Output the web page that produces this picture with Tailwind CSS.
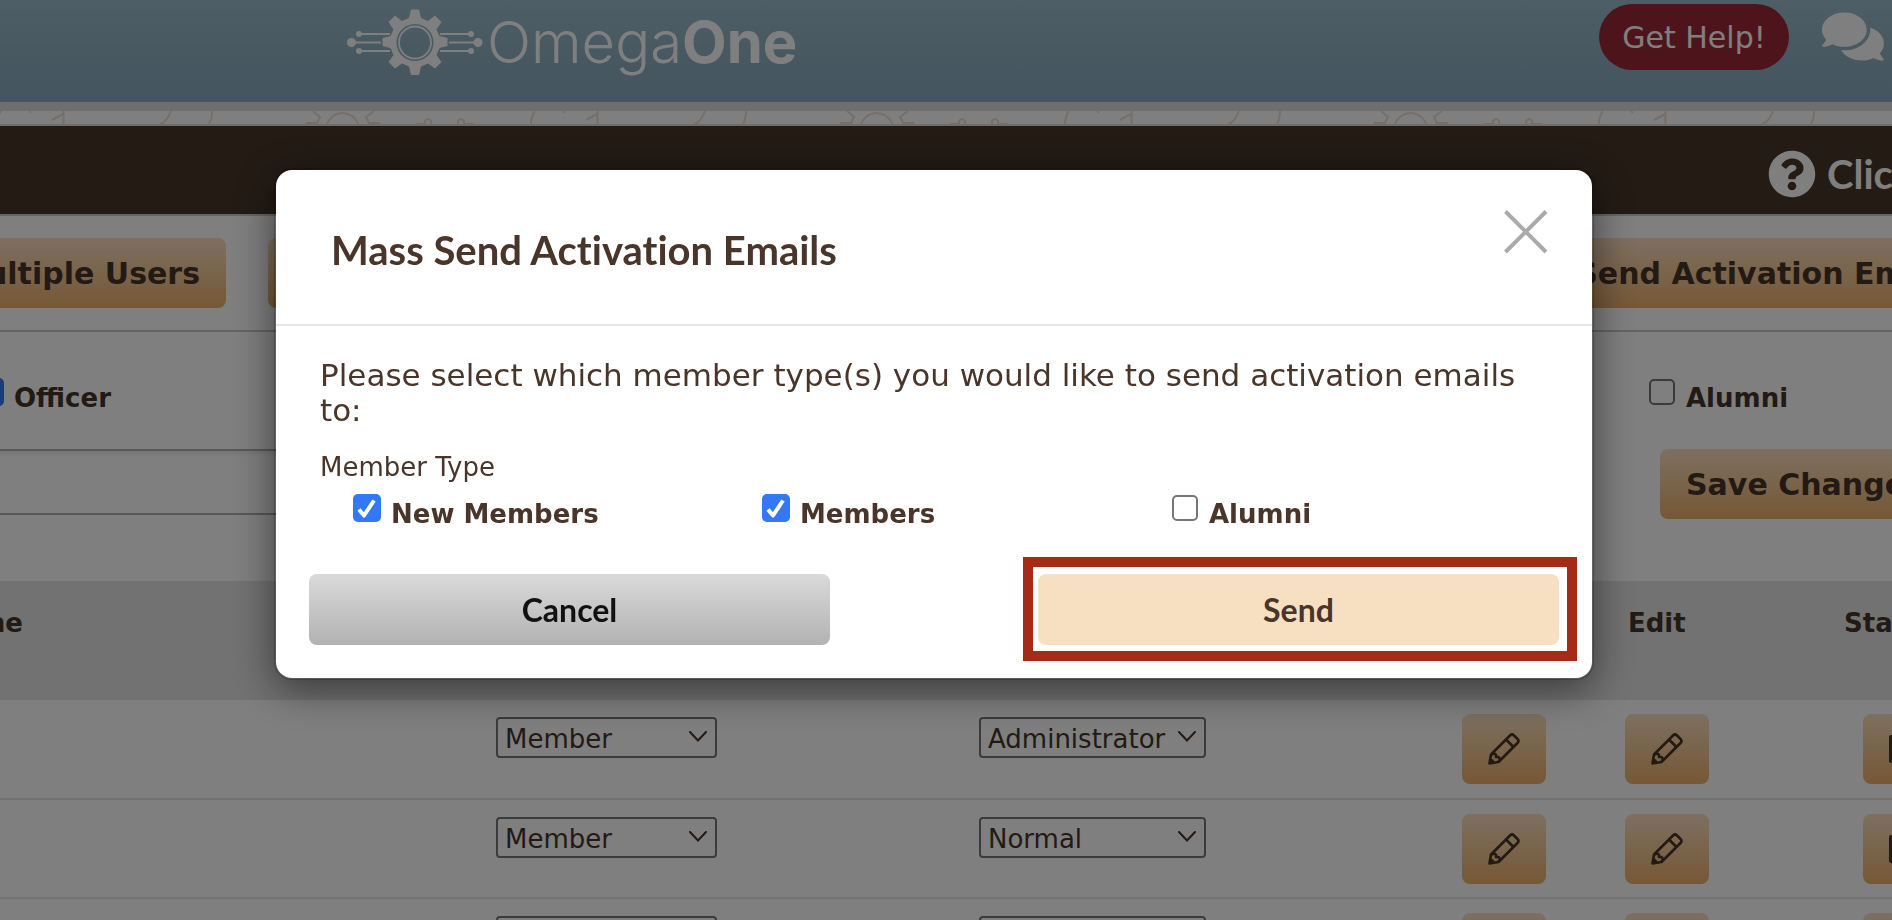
<!DOCTYPE html>
<html lang="en">

<head>
    <meta charset="UTF-8">
    <meta name="viewport" content="width=device-width, initial-scale=1.0">
    <title>OmegaOne - Users</title>
    <script src="https://cdn.jsdelivr.net/npm/@tailwindcss/browser@4"></script>
</head>

<body class="h-screen overflow-hidden bg-white font-['DejaVu_Sans',sans-serif] text-[26px] leading-[30px] text-[#493529]">

    <!-- Shared icons -->
    <svg class="hidden">
        <symbol id="tick" viewBox="0 0 28 28">
            <path d="M6 15.500l5 6L21 6.500" fill="none" stroke="#fff" stroke-width="4" stroke-linejoin="round" />
        </symbol>
        <symbol id="chevron" viewBox="0 0 18 12">
            <path d="M1 1l8 8.500L17 1" fill="none" stroke="currentColor" stroke-width="2" stroke-linecap="round" />
        </symbol>
        <symbol id="pencil" viewBox="0 0 32 32">
            <g fill="none" stroke="currentColor" stroke-width="2.600" stroke-linejoin="round">
                <path d="M1.500 30.500L3 21.500 22 2.500q2-2 4 0l3.500 3.500q2 2 0 4L10.500 29z" />
                <path d="M18 6.500L25.500 14" />
                <path d="M3.500 21.500q3.500-2 4.500 0.500v2h2.500q2.500 1.500 0 4.500" />
            </g>
            <path d="M1 31l1-6q4 1 5 5z" fill="currentColor" />
        </symbol>
    </svg>

    <!-- Header -->
    <header class="flex h-[102px] items-start bg-linear-to-b from-[#9abccc] to-[#8aa8bc] text-white">
        <a href="#" class="ml-[347px] flex items-center" aria-label="OmegaOne">
            <svg class="mt-[9px] h-[66px] w-[136px]" viewBox="0 0 136 66">
                <g stroke="#fff" stroke-width="2">
                    <path d="M12 25H43M5 33.500H34M12 42H43M93 25H124M102 33.500H131M93 42H124" />
                </g>
                <g fill="#fff">
                    <circle cx="12" cy="25" r="3" />
                    <circle cx="12" cy="42" r="3" />
                    <circle cx="4.500" cy="33.500" r="4.500" />
                    <circle cx="124" cy="25" r="3" />
                    <circle cx="124" cy="42" r="3" />
                    <circle cx="131" cy="33.500" r="4.500" />
                    <path fill-rule="evenodd" d="M64 0.500h8l2 8.500 7 3 7-5.500 6.500 6.500-5 7.500 3 6.500 8 2v8l-8 2-3 7 5 7-6.500 6.500-7-5-7 3-2 8.500h-8l-2-8.500-7-3-7 5-6.500-6.500 5-7-3-7-8-2v-8l8-2 3-6.500-5-7.500 6.500-6.500 7 5.500 7-3zM68 15a18.500 18.500 0 1 0 0.010 0z" />
                </g>
                <circle cx="68" cy="33.500" r="16" fill="none" stroke="#fff" stroke-width="1.800" />
            </svg>
            <span class="ml-1 mt-[9px] font-['Inter',sans-serif] text-[58px] leading-[66px] font-light">Omega<b class="font-bold">One</b></span>
        </a>
        <button class="mt-1 ml-auto h-[66px] w-[190px] rounded-full bg-[#9a2836] pt-0.5 text-[30px]">Get Help!</button>
        <a href="#" class="mt-[9px] mr-2 ml-[33px]" aria-label="Messages">
            <svg class="h-[55px] w-[62px]" viewBox="0 0 576 512" fill="currentColor">
                <path d="M416 192c0-88.400-93.100-160-208-160S0 103.600 0 192c0 34.300 14.100 65.900 38 92-13.400 30.200-35.500 54.200-35.800 54.500-2.200 2.300-2.800 5.700-1.500 8.700S4.800 352 8 352c36.600 0 66.900-12.300 88.700-25 32.200 15.700 70.300 25 111.300 25 114.900 0 208-71.600 208-160zm122 220c23.900-26 38-57.700 38-92 0-66.900-53.500-124.200-129.300-148.100.9 6.600 1.300 13.300 1.300 20.100 0 105.900-107.700 192-240 192-10.800 0-21.300-.8-31.700-1.900C207.800 439.600 281.800 480 368 480c41 0 79.100-9.200 111.300-25 21.800 12.700 52.100 25 88.700 25 3.200 0 6.100-1.900 7.300-4.800 1.300-2.900.7-6.300-1.500-8.700-.3-.3-22.400-24.200-35.800-54.500z" />
            </svg>
        </a>
    </header>

    <!-- Patterned strip -->
    <div class="h-6 border-t-[9px] border-b-2 border-[#dcdcdc]">
        <svg class="block h-[13px] w-full">
            <defs>
                <pattern id="doodles" x="-228" width="534" height="13" patternUnits="userSpaceOnUse">
                    <g fill="none" stroke="#e6dfd8" stroke-width="2">
                        <path d="M7 0L14 6L11 12H0M68 0L60 6L63 12H74M21 13q5-11 15.500-11t16 11" />
                        <path d="M110 13H119V10q3-4 6 0V13M152 13V10q3-4 6 0V13H168" />
                        <path d="M229 0q-4 6-4 13M257 0l2 2M280 9L291 3M291.500 0V13M399 0q-3 8-8 12l-3 1M440 0q0 8-3 13" />
                    </g>
                </pattern>
            </defs>
            <rect width="100%" height="13" fill="url(#doodles)" />
        </svg>
    </div>

    <!-- Help bar -->
    <div class="flex h-[90px] items-center border-b-2 border-[#cccccc] bg-[#483629] pt-2 text-white">
        <a href="#" class="ml-auto flex w-[124px] items-center gap-[11px] font-['Lato',sans-serif] text-[40px] leading-[48px] font-bold whitespace-nowrap">
            <svg class="h-12 w-12 shrink-0" viewBox="0 0 512 512" fill="currentColor">
                <path d="M504 256c0 136.997-111.043 248-248 248S8 392.997 8 256C8 119.083 119.043 8 256 8s248 111.083 248 248zM262.655 90c-54.497 0-89.255 22.957-116.549 63.758-3.536 5.286-2.353 12.415 2.715 16.258l34.699 26.310c5.205 3.947 12.621 3.008 16.665-2.122 17.864-22.658 30.113-35.797 57.303-35.797 20.429 0 45.698 13.148 45.698 32.958 0 14.976-12.363 22.667-32.534 33.976C247.128 238.528 216 254.941 216 296v4c0 6.627 5.373 12 12 12h56c6.627 0 12-5.373 12-12v-1.333c0-28.462 83.186-29.647 83.186-106.667 0-58.002-60.165-102-116.531-102zM256 338c-25.365 0-46 20.635-46 46 0 25.364 20.635 46 46 46s46-20.636 46-46c0-25.364-20.635-46-46-46z" />
            </svg>
            Click Here
        </a>
    </div>

    <!-- Actions -->
    <div class="flex h-[116px] items-center border-b-2 border-[#c8c8c8] text-[30px] leading-9 font-bold whitespace-nowrap">
        <button class="flex h-[70px] w-[226px] items-center justify-end overflow-hidden rounded-r-lg bg-linear-to-b from-[#fae0c0] to-[#ecb06a] pt-0.5 pr-[26px]">Add Multiple Users</button>
        <button class="ml-[42px] h-[70px] w-[300px] rounded-lg bg-linear-to-b from-[#fae0c0] to-[#ecb06a] pt-0.5" aria-label="Export Users"></button>
        <button class="ml-auto h-[70px] w-[438px] overflow-hidden rounded-l-lg bg-linear-to-b from-[#fae0c0] to-[#ecb06a] pt-0.5 pl-[26px] text-left">Mass Send Activation Emails</button>
    </div>

    <!-- Filters -->
    <div class="flex h-[117px] items-start pt-[46px] font-bold">
        <label class="-ml-6 flex items-start gap-[10px]">
            <span class="relative">
                <input type="checkbox" checked class="block h-7 w-7 appearance-none rounded-[5px] bg-[#3478f6]">
                <svg class="pointer-events-none absolute inset-0 h-7 w-7"><use href="#tick" /></svg>
            </span>
            <span class="mt-[5px]">Officer</span>
        </label>
        <label class="ml-auto flex w-[244px] items-start gap-[10px]">
            <input type="checkbox" class="m-px block h-[26px] w-[26px] appearance-none rounded-[5px] border-2 border-[#767676] bg-white">
            <span class="mt-[5px]">Alumni</span>
        </label>
    </div>

    <div class="flex h-[132px] items-start justify-between">
        <input type="text" aria-label="Search users" class="-ml-2 h-[66px] w-1/2 border-y-2 border-[#b0b0b0] shadow-[inset_0_3px_4px_rgba(0,0,0,0.08)]">
        <button class="h-[70px] w-[232px] overflow-hidden rounded-l-lg bg-linear-to-b from-[#fae0c0] to-[#ecb06a] pt-0.5 pl-[26px] text-left text-[30px] leading-9 font-bold whitespace-nowrap">Save Changes</button>
    </div>

    <!-- Users -->
    <table class="w-full table-fixed border-collapse">
        <colgroup>
            <col>
            <col class="w-[483px]">
            <col class="w-[483px]">
            <col class="w-[163px]">
            <col class="w-[219px]">
            <col class="w-[48px]">
        </colgroup>
        <thead>
            <tr class="h-[119px] bg-[#e4e4e4] text-left align-top">
                <th class="pt-[27px]"><div class="flex w-[23px] justify-end">Name</div></th>
                <th></th>
                <th></th>
                <th></th>
                <th class="pt-[27px] pl-[3px]">Edit</th>
                <th class="pt-[27px]"><div class="overflow-hidden">Status</div></th>
            </tr>
        </thead>
        <tbody id="users"></tbody>
    </table>

    <!-- Modal -->
    <div class="fixed inset-0 flex items-start bg-black/50 pt-[168px] pr-[298px] pl-[274px]">
        <div role="dialog" aria-labelledby="modalTitle" class="flex-1 rounded-[18px] border-2 border-black/20 bg-white bg-clip-padding shadow-[0_10px_40px_rgba(0,0,0,0.5)]">
            <div class="flex h-[156px] items-start justify-between border-b-2 border-[#e5e5e5] pr-11 pl-[55px]">
                <h2 id="modalTitle" class="mt-14 font-['Lato',sans-serif] text-[40px] leading-[48px] font-bold [font-variant-ligatures:none]">Mass Send Activation Emails</h2>
                <button aria-label="Close" class="mt-10">
                    <svg class="h-11 w-11" viewBox="0 0 44 44"><path d="M1.500 1.500L42 42M42 1.500L1.500 42" stroke="#aaa" stroke-width="4" /></svg>
                </button>
            </div>

            <div class="px-11 pt-8">
                <p class="text-[31px] leading-[35px]">Please select which member type(s) you would like to send activation emails to:</p>
                <fieldset class="mt-6">
                    <legend>Member Type</legend>
                    <div class="mt-3 -mr-8 grid grid-cols-3 pl-[33px] font-bold">
                        <label class="flex items-start gap-[10px]">
                            <span class="relative">
                                <input type="checkbox" checked class="block h-7 w-7 appearance-none rounded-[5px] bg-[#3478f6]">
                                <svg class="pointer-events-none absolute inset-0 h-7 w-7"><use href="#tick" /></svg>
                            </span>
                            <span class="mt-[5px]">New Members</span>
                        </label>
                        <label class="flex items-start gap-[10px]">
                            <span class="relative">
                                <input type="checkbox" checked class="block h-7 w-7 appearance-none rounded-[5px] bg-[#3478f6]">
                                <svg class="pointer-events-none absolute inset-0 h-7 w-7"><use href="#tick" /></svg>
                            </span>
                            <span class="mt-[5px]">Members</span>
                        </label>
                        <label class="flex items-start gap-[10px]">
                            <input type="checkbox" class="m-px block h-[26px] w-[26px] appearance-none rounded-[5px] border-2 border-[#767676] bg-white">
                            <span class="mt-[5px]">Alumni</span>
                        </label>
                    </div>
                </fieldset>
            </div>

            <div class="flex gap-52 px-[33px] pt-[45px] pb-[33px] font-['Lato',sans-serif] text-[32px] leading-10 font-bold">
                <button class="h-[71px] flex-1 rounded-lg bg-linear-to-b from-[#dadada] to-[#b2b2b2] text-[#111]">Cancel</button>
                <div class="relative flex flex-1">
                    <button class="h-[71px] flex-1 rounded-lg bg-[#f7e0c2]">Send</button>
                    <div class="pointer-events-none absolute -top-[17px] -right-[18px] -bottom-4 -left-[15px] border-10 border-[#a52a17]"></div>
                </div>
            </div>
        </div>
    </div>

    <script>
        const users = [
            { type: 'Member', role: 'Administrator' },
            { type: 'Member', role: 'Normal' },
            { type: 'Member', role: 'Normal' }
        ];

        function dropdown(label, value, options, width) {
            const items = options.map(o => `<option ${o === value ? 'selected' : ''}>${o}</option>`).join('');
            return `<div class="relative ${width}">
                <select aria-label="${label}" class="block h-[41px] w-full appearance-none rounded border-2 border-[#767676] bg-white pt-0.5 pl-[7px]">${items}</select>
                <svg class="pointer-events-none absolute top-[14px] right-[10px] h-3 w-[18px]"><use href="#chevron" /></svg>
            </div>`;
        }

        function iconButton(label, icon) {
            return `<button aria-label="${label}" class="flex h-[70px] w-[84px] items-center justify-center rounded-lg bg-linear-to-b from-[#fae0c0] to-[#ecb06a]">${icon}</button>`;
        }

        const pencil = '<svg class="h-8 w-8"><use href="#pencil" /></svg>';
        const box = '<svg class="h-8 w-8" viewBox="0 0 32 32"><rect x="0" y="2" width="32" height="28" rx="2" fill="currentColor" /></svg>';

        document.getElementById('users').innerHTML = users.map(user => `
            <tr class="h-[99px] border-b-2 border-[#e4e4e4] align-top">
                <td></td>
                <td class="pt-[17px]">${dropdown('Member type', user.type, ['Member', 'New Member', 'Alumni'], 'w-[221px]')}</td>
                <td class="pt-[17px]">${dropdown('Role', user.role, ['Administrator', 'Normal'], 'w-[227px]')}</td>
                <td class="pt-[14px]">${iconButton('Edit role', pencil)}</td>
                <td class="pt-[14px]">${iconButton('Edit user', pencil)}</td>
                <td class="pt-[14px] pl-[19px]">${iconButton('Status', box)}</td>
            </tr>`).join('');
    </script>

</body>

</html>
